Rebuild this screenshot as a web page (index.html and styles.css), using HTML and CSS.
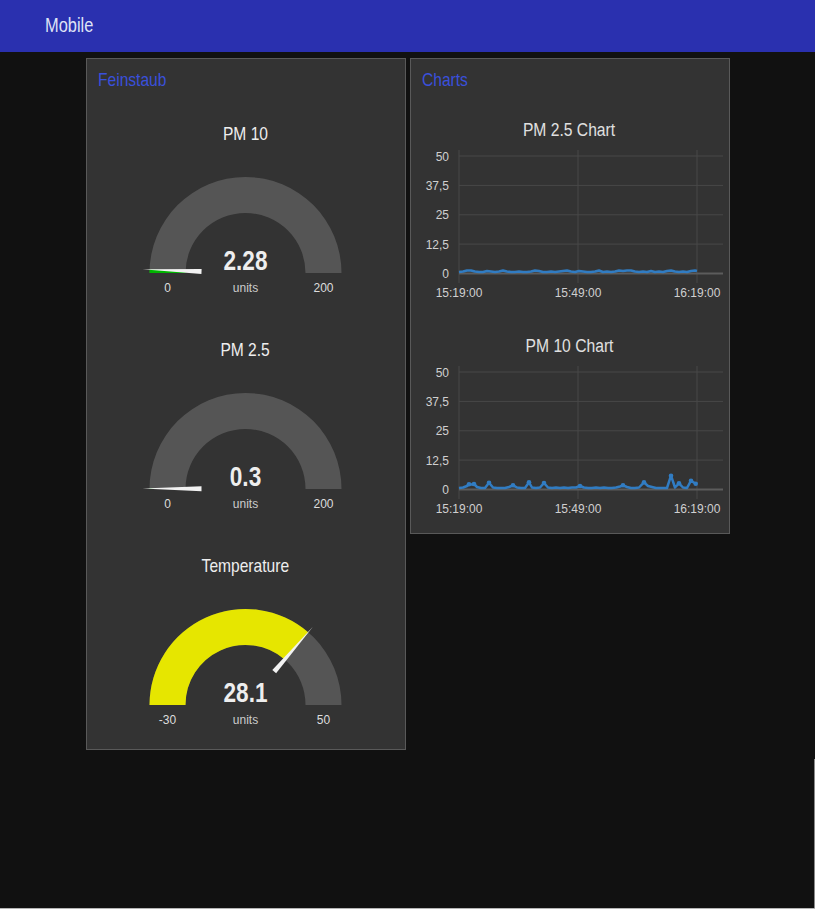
FILE: index.html
```html
<!DOCTYPE html>
<html lang="de">
<head>
<meta charset="utf-8">
<title>Mobile</title>
<link rel="stylesheet" href="styles.css">
</head>
<body>
<header class="topbar"><span class="narrow topbar-title">Mobile</span></header>
<main class="content">
  <section class="card card-gauges">
    <div class="card-head"><span class="narrow">Feinstaub</span></div>
    <div class="gauges">
      <div class="gauge">
        <div class="gauge-title"><span class="narrow">PM 10</span></div>
        <svg class="gauge-svg" width="318" height="140" viewBox="0 0 318 140">
          <path class="g-bg" d="M62.5 115 A96 96 0 0 1 254.5 115 L218.5 115 A60 60 0 0 0 98.5 115 Z"/>
          <path class="g-green" d="M62.5 115 A96 96 0 0 1 62.56 111.56 L98.54 112.85 A60 60 0 0 0 98.5 115 Z"/>
          <polygon class="g-needle" points="114.62,110.92 114.44,115.92 55.57,111.31"/>
          <text class="g-value" x="158.5" y="112" textLength="44" lengthAdjust="spacingAndGlyphs">2.28</text>
          <text class="g-label" x="80.5" y="133.5">0</text>
          <text class="g-label g-units" x="158.5" y="133.5">units</text>
          <text class="g-label" x="236.5" y="133.5">200</text>
        </svg>
      </div>
      <div class="gauge">
        <div class="gauge-title"><span class="narrow">PM 2.5</span></div>
        <svg class="gauge-svg" width="318" height="140" viewBox="0 0 318 140">
          <path class="g-bg" d="M62.5 115 A96 96 0 0 1 254.5 115 L218.5 115 A60 60 0 0 0 98.5 115 Z"/>
          <path class="g-green" d="M62.5 115 A96 96 0 0 1 62.5 114.55 L98.5 114.72 A60 60 0 0 0 98.5 115 Z"/>
          <polygon class="g-needle" points="114.51,112.29 114.49,117.29 55.5,114.51"/>
          <text class="g-value" x="158.5" y="112" textLength="31.5" lengthAdjust="spacingAndGlyphs">0.3</text>
          <text class="g-label" x="80.5" y="133.5">0</text>
          <text class="g-label g-units" x="158.5" y="133.5">units</text>
          <text class="g-label" x="236.5" y="133.5">200</text>
        </svg>
      </div>
      <div class="gauge">
        <div class="gauge-title"><span class="narrow">Temperature</span></div>
        <svg class="gauge-svg" width="318" height="140" viewBox="0 0 318 140">
          <path class="g-bg" d="M62.5 115 A96 96 0 0 1 254.5 115 L218.5 115 A60 60 0 0 0 98.5 115 Z"/>
          <path class="g-yellow" d="M62.5 115 A96 96 0 0 1 221.15 42.26 L197.66 69.54 A60 60 0 0 0 98.5 115 Z"/>
          <polygon class="g-needle" points="189.1,83.29 185.32,80.03 225.72,36.96"/>
          <text class="g-value" x="158.5" y="112" textLength="44" lengthAdjust="spacingAndGlyphs">28.1</text>
          <text class="g-label" x="80.5" y="133.5">-30</text>
          <text class="g-label g-units" x="158.5" y="133.5">units</text>
          <text class="g-label" x="236.5" y="133.5">50</text>
        </svg>
      </div>
    </div>
  </section>
  <section class="card card-charts">
    <div class="card-head"><span class="narrow">Charts</span></div>
    <div class="charts">
      <div class="chart">
        <div class="chart-title"><span class="narrow">PM 2.5 Chart</span></div>
        <svg class="chart-svg" width="318" height="152" viewBox="0 0 318 152">
          <g class="grid">
            <line x1="48" y1="6" x2="312" y2="6"/>
            <line x1="48" y1="35.4" x2="312" y2="35.4"/>
            <line x1="48" y1="64.8" x2="312" y2="64.8"/>
            <line x1="48" y1="94.1" x2="312" y2="94.1"/>
            <line x1="48" y1="0" x2="48" y2="133"/>
            <line x1="167" y1="0" x2="167" y2="133"/>
            <line x1="286" y1="0" x2="286" y2="133"/>
          </g>
          <line class="axis" x1="48" y1="123.5" x2="312" y2="123.5"/>
          <g class="ylabels">
            <text x="38" y="10.5">50</text>
            <text x="38" y="39.9">37,5</text>
            <text x="38" y="69.3">25</text>
            <text x="38" y="98.6">12,5</text>
            <text x="38" y="128">0</text>
          </g>
          <g class="xlabels">
            <text x="48" y="147">15:19:00</text>
            <text x="167" y="147">15:49:00</text>
            <text x="286" y="147">16:19:00</text>
          </g>
          <polyline class="series" points="48,122 52,121.5 56,120.5 60,120.5 64,121.5 68,122 72,122 76,121 80,121.5 84,122 88,121.5 92,120.5 96,121.5 100,122 104,122 108,121.5 112,122 116,122 120,121.5 124,120.5 128,121 132,122 136,122 140,121.5 144,122 148,121.5 152,121 156,120.5 160,121.5 164,122 168,121 172,121.5 176,122 180,122 184,121.5 188,120.5 192,122 196,121.5 200,122 204,121.5 208,120.5 212,121 216,120.5 220,120.5 224,121.5 228,122 232,121.5 236,122 240,121 244,122 248,121.5 252,122 256,121 260,120.5 264,121.5 268,122 272,121.5 276,122 280,121 284,120.5 286,121"/>
        </svg>
      </div>
      <div class="chart">
        <div class="chart-title"><span class="narrow">PM 10 Chart</span></div>
        <svg class="chart-svg" width="318" height="152" viewBox="0 0 318 152">
          <g class="grid">
            <line x1="48" y1="6" x2="312" y2="6"/>
            <line x1="48" y1="35.4" x2="312" y2="35.4"/>
            <line x1="48" y1="64.8" x2="312" y2="64.8"/>
            <line x1="48" y1="94.1" x2="312" y2="94.1"/>
            <line x1="48" y1="0" x2="48" y2="133"/>
            <line x1="167" y1="0" x2="167" y2="133"/>
            <line x1="286" y1="0" x2="286" y2="133"/>
          </g>
          <line class="axis" x1="48" y1="123.5" x2="312" y2="123.5"/>
          <g class="ylabels">
            <text x="38" y="10.5">50</text>
            <text x="38" y="39.9">37,5</text>
            <text x="38" y="69.3">25</text>
            <text x="38" y="98.6">12,5</text>
            <text x="38" y="128">0</text>
          </g>
          <g class="xlabels">
            <text x="48" y="147">15:19:00</text>
            <text x="167" y="147">15:49:00</text>
            <text x="286" y="147">16:19:00</text>
          </g>
          <polyline class="series" points="48,122 52,121.5 56,120 58,118.3 61,118.5 63,118 66,121 70,122 74,122 78,116.7 82,121.5 86,122 90,122 94,122 98,121 102,119.3 106,121.5 110,122 114,122 118,116.3 121,121.5 125,122 129,121.5 133,117 137,121.5 141,122 145,121.5 149,122 153,121.5 157,122 161,121.5 165,121.5 169,120 173,121.5 177,122 181,122 185,121.5 189,122 193,121.5 197,122 201,122 205,121.5 209,120.5 212,119.3 216,121 220,122 224,122 228,121.5 233,116.3 237,120 241,121 245,122 249,122 253,122 256,122 260,109.7 264,121.5 268,117.3 272,121.5 276,122 280,114.7 284.7,117.7 286,118"/>
          <g class="dots">
            <circle cx="58" cy="118.3" r="2.3"/><circle cx="63" cy="118" r="2.3"/>
            <circle cx="78" cy="116.7" r="2.3"/><circle cx="102" cy="119.3" r="2.3"/>
            <circle cx="118" cy="116.3" r="2.3"/><circle cx="133" cy="117" r="2.3"/>
            <circle cx="169" cy="120" r="2.3"/><circle cx="212" cy="119.3" r="2.3"/>
            <circle cx="233" cy="116.3" r="2.3"/><circle cx="260" cy="109.7" r="2.3"/>
            <circle cx="268" cy="117.3" r="2.3"/><circle cx="280" cy="114.7" r="2.3"/>
            <circle cx="284.7" cy="117.7" r="2.3"/>
          </g>
        </svg>
      </div>
    </div>
  </section>
</main>
</body>
</html>
```
FILE: styles.css
```css
html, body {
  margin: 0;
  padding: 0;
}
body {
  background: #111111;
  font-family: "Liberation Sans", Arial, sans-serif;
  min-height: 909px;
  box-sizing: border-box;
}
body::after {
  content: "";
  position: fixed;
  left: 0;
  right: 0;
  bottom: 0;
  height: 1px;
  background: #b5b5b5;
}
body::before {
  content: "";
  position: fixed;
  right: 0;
  top: 759px;
  bottom: 0;
  width: 1px;
  background: #8a8a8a;
}
.narrow {
  display: inline-block;
  transform: scaleX(0.82);
  transform-origin: center;
  white-space: nowrap;
}
.topbar {
  height: 52px;
  background: #2a30af;
  display: flex;
  align-items: center;
  padding: 0 0 2px 45px;
  box-sizing: border-box;
}
.topbar-title {
  font-size: 20px;
  color: #dfe3f6;
  transform-origin: left center;
}
.content {
  display: flex;
  justify-content: center;
  align-items: flex-start;
  gap: 4px;
  padding-top: 6px;
}
.card {
  width: 318px;
  background: #333333;
  border: 1px solid #595959;
}
.card-gauges {
  padding-bottom: 19px;
}
.card-charts {
  padding-bottom: 15px;
}
.card-head {
  height: 49px;
  box-sizing: border-box;
  padding: 10px 0 0 11px;
  line-height: 22px;
  font-size: 19px;
  color: #3a50dc;
}
.card-head .narrow {
  transform-origin: left center;
}
.gauges, .charts {
  display: flex;
  flex-direction: column;
}
.gauges { gap: 26px; }
.charts { gap: 22px; }
.gauge-title {
  height: 50px;
  line-height: 52px;
  text-align: center;
  font-size: 19px;
  color: #eeeeee;
}
.gauge-svg, .chart-svg {
  display: block;
}
.g-bg { fill: #555555; }
.g-green { fill: #00b500; }
.g-yellow { fill: #e6e600; }
.g-needle { fill: #f2f2f2; }
.g-value {
  font-family: "Liberation Sans", Arial, sans-serif;
  font-weight: bold;
  font-size: 27px;
  fill: #eeeeee;
  text-anchor: middle;
}
.g-label {
  font-family: "Liberation Sans", Arial, sans-serif;
  font-size: 12px;
  fill: #dddddd;
  text-anchor: middle;
}
.g-units { fill: #cccccc; }
.chart-title {
  height: 42px;
  line-height: 44px;
  text-align: center;
  font-size: 18px;
  color: #e0e0e0;
}
.chart-title .narrow {
  transform: scaleX(0.87);
}
.grid line {
  stroke: #484848;
  stroke-width: 1;
}
.axis {
  stroke: #5c5c5c;
  stroke-width: 2;
}
.ylabels text, .xlabels text {
  font-family: "Liberation Sans", Arial, sans-serif;
  font-size: 12px;
  fill: #d0d0d0;
}
.ylabels text { text-anchor: end; }
.xlabels text { text-anchor: middle; }
.series {
  fill: none;
  stroke: #317cc2;
  stroke-width: 2.5;
  stroke-linejoin: round;
}
.dots circle { fill: #317cc2; }
```
